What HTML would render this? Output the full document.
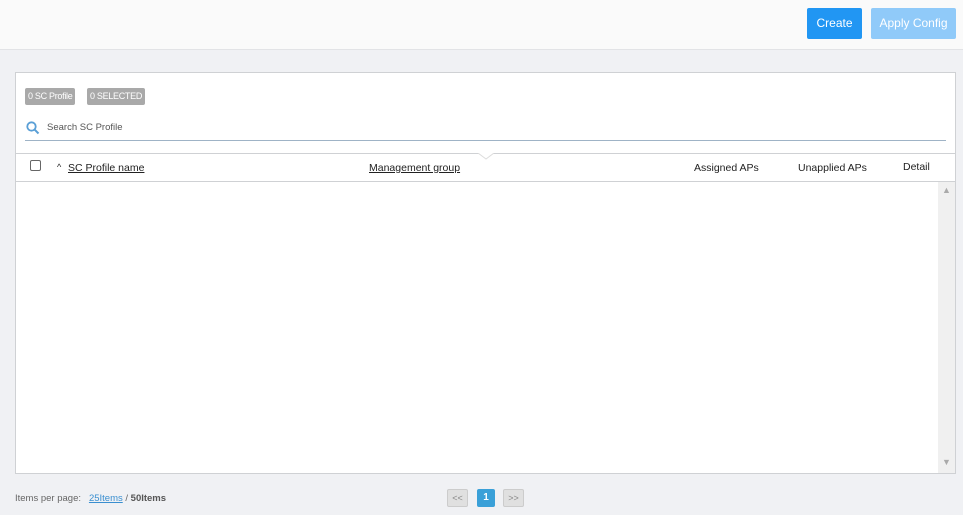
<!DOCTYPE html>
<html><head><style>
*{margin:0;padding:0;box-sizing:border-box}
body{width:963px;height:515px;background:#f0f1f4;font-family:"Liberation Sans",sans-serif;position:relative;overflow:hidden;font-size:10.5px;color:#222}
.top{position:absolute;left:0;top:0;width:963px;height:50px;background:#fafafa;border-bottom:1px solid #e2e3e6}
.btn{position:absolute;top:8px;height:31px;border-radius:2px;color:#fff;font-size:12px;line-height:31px;text-align:center}
.panel{position:absolute;left:15px;top:72px;width:941px;height:402px;background:#fff;border:1px solid #cfd1d4}
.badge{position:absolute;top:15px;height:17px;background:#a9a9a9;color:#fff;border-radius:2px;font-size:9px;line-height:17px;padding:0 3px;letter-spacing:-0.3px}
.a{position:absolute;white-space:nowrap}
</style></head><body>
<div class="top">
<div class="btn" style="left:807px;width:55px;background:#2196f3">Create</div>
<div class="btn" style="left:871px;width:85px;background:#90caf9">Apply Config</div>
</div>
<div class="panel">
<div class="badge" style="left:9px">0 SC Profile</div>
<div class="badge" style="left:71px">0 SELECTED</div>
<svg class="a" style="left:10px;top:48px" width="14" height="14" viewBox="0 0 14 14"><circle cx="5.5" cy="5.5" r="4.2" fill="none" stroke="#5a9fd6" stroke-width="1.8"/><path d="M8.6 8.6L12.5 12.5" stroke="#5a9fd6" stroke-width="2"/></svg>
<div class="a" style="left:31px;top:49px;font-size:9.5px;color:#555">Search SC Profile</div>
<div class="a" style="left:9px;top:67px;width:921px;height:1px;background:#9fb3c6"></div>
<div class="a" style="left:0;top:80px;width:939px;height:1px;background:#cfd1d4"></div>
<svg class="a" style="left:462px;top:80px" width="16" height="8"><path d="M0 0L8 6L16 0" fill="#fff" stroke="#ddd"/></svg>
<div class="a" style="left:14px;top:87px;width:11px;height:11px;border:1px solid #666;border-radius:2px"></div>
<div class="a" style="left:41px;top:89px;font-size:9px">^</div>
<div class="a" style="left:52px;top:89px;text-decoration:underline">SC Profile name</div>
<div class="a" style="left:353px;top:89px;text-decoration:underline">Management group</div>
<div class="a" style="left:678px;top:89px">Assigned APs</div>
<div class="a" style="left:782px;top:89px">Unapplied APs</div>
<div class="a" style="left:887px;top:88px">Detail</div>
<div class="a" style="left:0;top:108px;width:939px;height:1px;background:#cfd1d4"></div>
<div class="a" style="left:922px;top:109px;width:17px;height:291px;background:#f0f0f0"></div>
<div class="a" style="left:926px;top:112px;font-size:9px;color:#aaa">▲</div>
<div class="a" style="left:926px;top:384px;font-size:9px;color:#aaa">▼</div>
</div>
<div class="a" style="left:15px;top:493px;font-size:9.5px;color:#666">Items per page:&nbsp;&nbsp; <span style="color:#3a8fd0;text-decoration:underline">25Items</span> / <b style="color:#555">50Items</b></div>
<div class="a" style="left:447px;top:489px;width:21px;height:18px;background:#e0e0e0;border:1px solid #ccc;border-radius:2px;font-size:9px;color:#888;text-align:center;line-height:16px">&lt;&lt;</div>
<div class="a" style="left:477px;top:489px;width:18px;height:18px;background:#3aa0d8;border-radius:2px;font-size:10px;color:#fff;font-weight:bold;text-align:center;line-height:18px">1</div>
<div class="a" style="left:503px;top:489px;width:21px;height:18px;background:#e0e0e0;border:1px solid #ccc;border-radius:2px;font-size:9px;color:#888;text-align:center;line-height:16px">&gt;&gt;</div>
</body></html>
